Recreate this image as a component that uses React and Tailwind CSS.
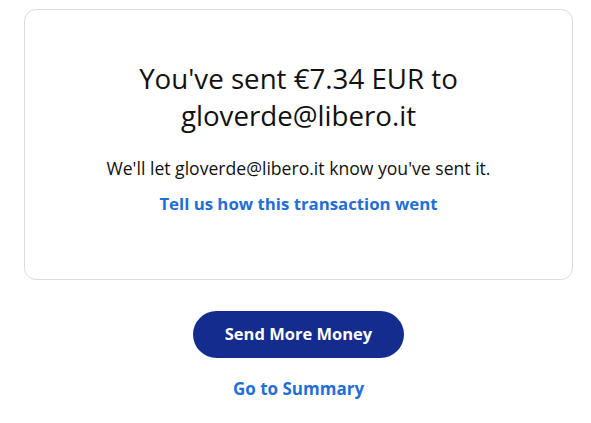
import React from 'react';

const App = () => {
  return (
    <div className="min-h-screen bg-white pt-[9px] font-['Open_Sans',sans-serif] text-[#111]">
      <div className="ml-[24px] w-[549px] rounded-[12px] border border-[#dcdcdc] pt-[50px] pb-[63px] px-6 text-center">
        <h1 className="mx-auto max-w-[380px] text-[27.7px] leading-[37px] font-normal">
          You've sent €7.34 EUR to gloverde@libero.it
        </h1>
        <p className="mt-[22px] text-[17.6px] leading-[24px]">
          We'll let gloverde@libero.it know you've sent it.
        </p>
        <a href="#" className="mt-[12px] block text-[16.8px] leading-[24px] font-bold text-[#1f6fd8]">
          Tell us how this transaction went
        </a>
      </div>
      <div className="ml-[24px] w-[549px] mt-[31px] flex flex-col items-center">
        <button className="h-[47px] w-[211px] rounded-full bg-[#142c8e] text-[16.5px] font-bold text-white">
          Send More Money
        </button>
        <a href="#" className="mt-[19px] text-[17px] leading-[24px] font-bold text-[#1f6fd8]">
          Go to Summary
        </a>
      </div>
    </div>
  );
};

export default App;
